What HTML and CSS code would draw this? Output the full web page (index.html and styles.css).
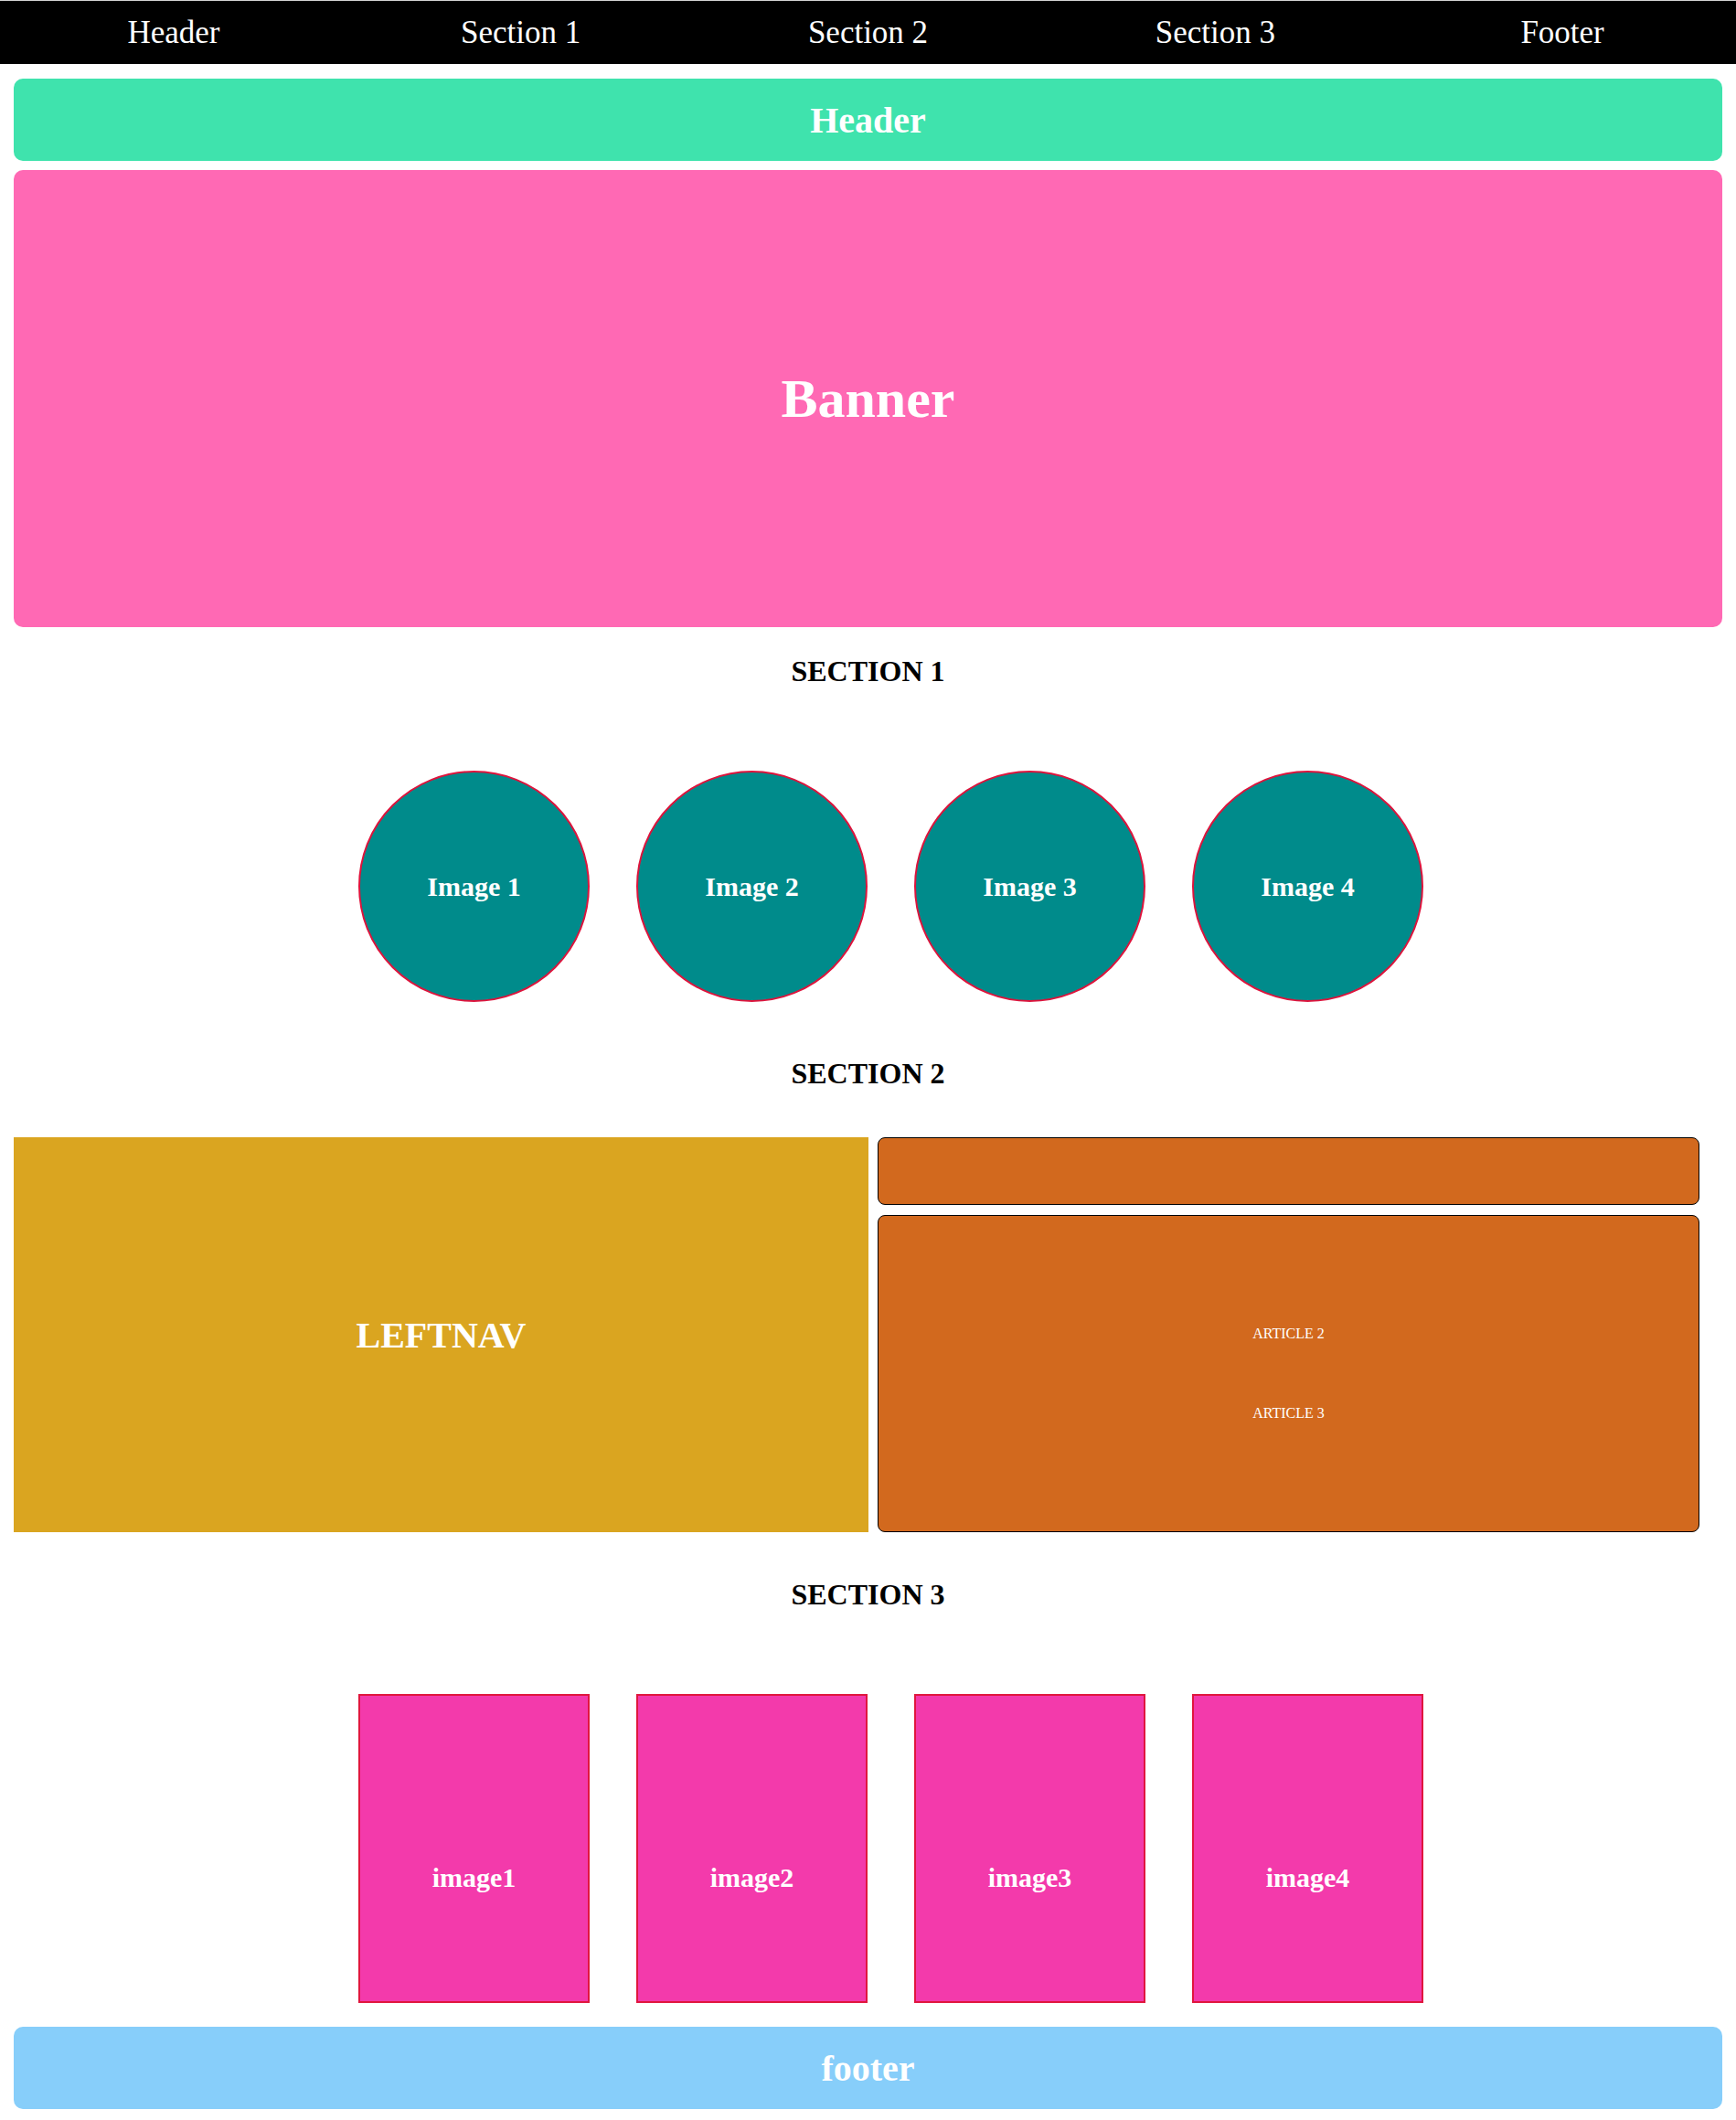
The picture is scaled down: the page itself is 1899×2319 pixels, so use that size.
FILE: index.html
```html
<!DOCTYPE html>
<html lang="en">
<head>
    <meta charset="UTF-8">
    <meta name="viewport" content="width=device-width, initial-scale=1.0">
    <title>Layout</title>
    <link rel="stylesheet" href="styles.css">
</head>
<body>
    <nav class="topnav">
        <a href="#header">Header</a>
        <a href="#section1">Section 1</a>
        <a href="#section2">Section 2</a>
        <a href="#section3">Section 3</a>
        <a href="#footer">Footer</a>
    </nav>

    <header id="header" class="header">Header</header>

    <div class="banner">Banner</div>

    <h2 id="section1" class="section-title title-1">SECTION 1</h2>
    <div class="circles">
        <div class="circle">Image 1</div>
        <div class="circle">Image 2</div>
        <div class="circle">Image 3</div>
        <div class="circle">Image 4</div>
    </div>

    <h2 id="section2" class="section-title title-2">SECTION 2</h2>
    <div class="section2">
        <div class="leftnav">LEFTNAV</div>
        <div class="articles">
            <div class="article article-top"></div>
            <div class="article article-main">
                <p>ARTICLE 2</p>
                <p>ARTICLE 3</p>
            </div>
        </div>
    </div>

    <h2 id="section3" class="section-title title-3">SECTION 3</h2>
    <div class="cards">
        <div class="card">image1</div>
        <div class="card">image2</div>
        <div class="card">image3</div>
        <div class="card">image4</div>
    </div>

    <footer id="footer" class="footer">footer</footer>
</body>
</html>
```

FILE: styles.css
```css
* { margin: 0; padding: 0; box-sizing: border-box; }

body {
    font-family: "Liberation Serif", "Times New Roman", serif;
    background: #fff;
    color: #000;
    padding-bottom: 12px;
}

.topnav {
    display: flex;
    height: 70px;
    background: #000;
    border-top: 1px solid #d4d4d4;
}

.topnav a {
    flex: 1;
    display: flex;
    align-items: center;
    justify-content: center;
    color: #fff;
    font-size: 35px;
    text-decoration: none;
}

.header,
.banner,
.footer {
    display: flex;
    align-items: center;
    justify-content: center;
    margin: 0 15px;
    border-radius: 10px;
    color: #fff;
    font-weight: bold;
}

.header {
    margin-top: 16px;
    height: 90px;
    background: #3fe3ad;
    font-size: 40px;
}

.banner {
    margin-top: 10px;
    height: 500px;
    background: #ff69b4;
    font-size: 60px;
}

.section-title {
    text-align: center;
    font-size: 32px;
    line-height: 37px;
}

.title-1 { margin-top: 30px; }
.title-2 { margin-top: 60px; }
.title-3 { margin-top: 50px; }

.circles,
.cards {
    display: flex;
    justify-content: center;
    gap: 51px;
    padding-left: 50px;
    margin-top: 90px;
}

.circle {
    width: 253px;
    height: 253px;
    border-radius: 50%;
    border: 2px solid #dc143c;
    background: #008b8b;
    display: flex;
    align-items: center;
    justify-content: center;
    color: #fff;
    font-size: 30px;
    font-weight: bold;
}

.section2 {
    display: grid;
    grid-template-columns: 935px 1fr;
    gap: 10px;
    margin: 51px 40px 0 15px;
    height: 432px;
}

.leftnav {
    background: #daa520;
    display: flex;
    align-items: center;
    justify-content: center;
    color: #fff;
    font-size: 40px;
    font-weight: bold;
}

.articles {
    display: flex;
    flex-direction: column;
    gap: 11px;
}

.article {
    background: #d2691e;
    border: 1px solid #000;
    border-radius: 8px;
}

.article-top {
    height: 74px;
}

.article-main {
    flex: 1;
    display: flex;
    flex-direction: column;
    align-items: center;
    justify-content: center;
    gap: 69px;
    color: #fff;
    font-size: 16px;
    line-height: 18px;
}

.card {
    width: 253px;
    height: 338px;
    border: 2px solid #e0163f;
    background: #f33aab;
    display: flex;
    align-items: center;
    justify-content: center;
    padding-top: 64px;
    color: #fff;
    font-size: 30px;
    font-weight: bold;
}

.footer {
    margin-top: 26px;
    height: 90px;
    background: #87cefa;
    font-size: 40px;
}
```
